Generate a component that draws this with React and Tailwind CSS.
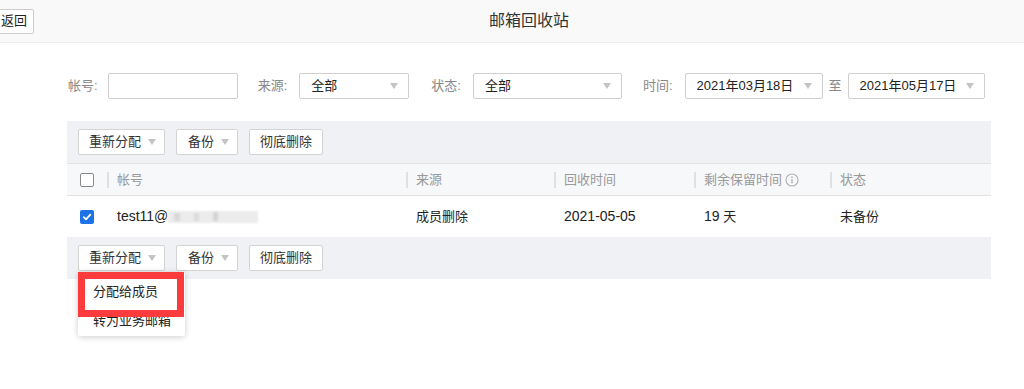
const font = { fontFamily: '"Liberation Sans", "Noto Sans CJK SC", sans-serif' };

function Arrow() {
    return <span className="inline-block w-0 h-0 border-l-[4px] border-r-[4px] border-t-[6px] border-l-transparent border-r-transparent border-t-[#c4c4c4]"></span>;
}

function Select({ value, width }) {
    return (
        <div className={`${width} h-[26px] border border-[#cfcfcf] rounded-[2px] bg-white flex items-center justify-between pl-[11px] pr-[10px] text-[13px] text-[#222]`}>
            <span>{value}</span>
            <Arrow />
        </div>
    );
}

function Label({ children, className = '' }) {
    return <span className={`text-[13px] text-[#888] mr-[10px] ${className}`}>{children}</span>;
}

function Toolbar() {
    return (
        <div className="h-[42px] bg-[#eff1f4] flex items-center pl-[11px] gap-[11px]">
            <button className="h-[26px] bg-white border border-[#d3d3d3] rounded-[2px] pl-[10px] pr-[8px] flex items-center gap-[7px] text-[13px] text-[#333]">
                重新分配 <Arrow />
            </button>
            <button className="h-[26px] bg-white border border-[#d3d3d3] rounded-[2px] pl-[11px] pr-[8px] flex items-center gap-[7px] text-[13px] text-[#333]">
                备份 <Arrow />
            </button>
            <button className="h-[26px] bg-white border border-[#d3d3d3] rounded-[2px] px-[10px] flex items-center text-[13px] text-[#333]">
                彻底删除
            </button>
        </div>
    );
}

function Sep() {
    return <span className="w-[2px] h-[16px] bg-[#e0e0e0] mr-[8px]"></span>;
}

function InfoIcon() {
    return (
        <svg width="14" height="14" viewBox="0 0 14 14" className="ml-[3px]">
            <circle cx="7" cy="7" r="6" fill="none" stroke="#b5b5b5" strokeWidth="1.2" />
            <circle cx="7" cy="4.2" r="0.9" fill="#b5b5b5" />
            <rect x="6.3" y="6" width="1.4" height="4.4" fill="#b5b5b5" />
        </svg>
    );
}

const cols = ['w-[299px]', 'w-[148px]', 'w-[140px]', 'w-[136px]', 'flex-1'];

export default function App() {
    return (
        <div className="w-[1024px] h-[389px] bg-white overflow-hidden" style={font}>
            {/* Header */}
            <div className="h-[43px] bg-[#f9f9f9] border-b border-[#eeeeee] flex items-center">
                <button className="-ml-[5px] h-[25px] border border-[#cccccc] rounded-[2px] bg-white pl-[5px] pr-[6px] text-[13px] text-[#222]">
                    返回
                </button>
                <div className="flex-1 text-center text-[16px] text-[#333]">邮箱回收站</div>
            </div>

            {/* Filters */}
            <div className="flex items-center mt-[30px] pl-[68px]">
                <Label>帐号:</Label>
                <div className="w-[130px] h-[26px] border border-[#cfcfcf] rounded-[2px] bg-white"></div>
                <Label className="ml-[20px] mr-[12px]">来源:</Label>
                <Select value="全部" width="w-[110px]" />
                <Label className="ml-[22px] mr-[12px]">状态:</Label>
                <Select value="全部" width="w-[149px]" />
                <Label className="ml-[21px] mr-[12px]">时间:</Label>
                <Select value="2021年03月18日" width="w-[138px]" />
                <span className="text-[13px] text-[#888] mx-[6px]">至</span>
                <Select value="2021年05月17日" width="w-[137px]" />
            </div>

            {/* Table */}
            <div className="ml-[67px] w-[924px] mt-[22px] relative">
                <Toolbar />
                <div className="h-[33px] bg-[#f7f8fa] border-t border-b border-[#e2e2e2] flex items-center text-[13px] text-[#999]">
                    <div className="w-[40px] pl-[13px] flex items-center">
                        <span className="w-[14px] h-[14px] border border-[#8a8a8a] rounded-[2px] bg-white"></span>
                    </div>
                    {['帐号', '来源', '回收时间', '剩余保留时间', '状态'].map((t, i) => (
                        <div key={t} className={`${cols[i]} flex items-center`}>
                            <Sep />
                            <span>{t}</span>
                            {i === 3 && <InfoIcon />}
                        </div>
                    ))}
                </div>
                <div className="h-[41px] bg-white flex items-center text-[13px] text-[#222]">
                    <div className="w-[40px] pl-[13px] flex items-center">
                        <span className="w-[14px] h-[14px] rounded-[2px] bg-[#1c72e6] flex items-center justify-center">
                            <svg width="10" height="10" viewBox="0 0 10 10">
                                <path d="M1.8 5.2 L4 7.4 L8.3 2.6" fill="none" stroke="white" strokeWidth="1.8" strokeLinecap="round" strokeLinejoin="round" />
                            </svg>
                        </span>
                    </div>
                    <div className={`${cols[0]} pl-[10px] flex items-center`}>
                        <span className="text-[14px]">test11@</span>
                        <span className="flex items-center h-[12px] w-[90px] bg-[#ececec] blur-[1px]">
                            <span className="w-[6px] h-[8px] bg-[#d8d8d8] ml-[6px]"></span>
                            <span className="w-[5px] h-[8px] bg-[#dcdcdc] ml-[14px]"></span>
                            <span className="w-[5px] h-[9px] bg-[#d4d4d4] ml-[14px]"></span>
                        </span>
                    </div>
                    <div className={`${cols[1]} pl-[10px]`}>成员删除</div>
                    <div className={`${cols[2]} pl-[10px] text-[14px]`}>2021-05-05</div>
                    <div className={`${cols[3]} pl-[10px]`}><span className="text-[14px]">19</span> 天</div>
                    <div className={`${cols[4]} pl-[10px]`}>未备份</div>
                </div>
                <Toolbar />

                {/* Dropdown */}
                <div className="absolute left-[11px] top-[151px] w-[107px] bg-white rounded-[2px] shadow-[0_1px_6px_rgba(0,0,0,0.2)] pt-[4px] pb-[2px] text-[13px] text-[#222]">
                    <div className="h-[32px] flex items-center pl-[15px]">分配给成员</div>
                    <div className="h-[26px] flex items-center pl-[15px]">转为业务邮箱</div>
                </div>
                {/* red highlight annotation */}
                <div className="absolute left-[11px] top-[151px] w-[106px] h-[45px] border-[7px] border-[#fc3c3c]"></div>
            </div>
        </div>
    );
}
